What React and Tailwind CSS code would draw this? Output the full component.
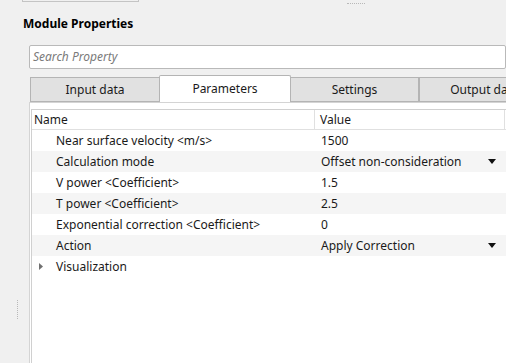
import React from "react";

const font = { fontFamily: '"Segoe UI", "Noto Sans", "Open Sans", sans-serif' };

function Arrow() {
  return (
    <svg width="8" height="5" viewBox="0 0 8 5" className="block">
      <path d="M0 0 H8 L4 5 Z" fill="#111" />
    </svg>
  );
}

const rows = [
  { name: "Near surface velocity <m/s>", value: "1500" },
  { name: "Calculation mode", value: "Offset non-consideration", drop: true },
  { name: "V power <Coefficient>", value: "1.5" },
  { name: "T power <Coefficient>", value: "2.5" },
  { name: "Exponential correction <Coefficient>", value: "0" },
  { name: "Action", value: "Apply Correction", drop: true },
];

export default function App() {
  return (
    <div
      className="relative w-[506px] h-[363px] overflow-hidden bg-[#f0f0f0] text-[12px] text-[#1a1a1a]"
      style={font}
    >
      {/* splitter handles */}
      <div className="absolute left-[347px] top-[3px] w-[18px] border-t border-dotted border-[#b8b8b8]" />
      <div className="absolute left-[17px] top-[300px] h-[19px] border-l border-dotted border-[#b8b8b8]" />

      <div className="flex flex-col">
        <div className="ml-[22px] w-[117px] h-[2px] border-x border-b border-[#c4c4c4] bg-[#f0f0f0]" />
        <div className="ml-[23px] mt-[14px] h-[16px] leading-[16px] font-bold text-[12px] text-black">
          Module Properties
        </div>
        <div className="ml-[29px] mt-[13px] h-[24px] bg-white border border-[#b9b9b9] rounded-[2px] flex items-center pl-[3px]">
          <span className="italic text-[#7a7a7a]">Search Property</span>
        </div>

        {/* tabs */}
        <div className="ml-[30px] mt-[6px] h-[27px] flex items-end">
          <div className="w-[130px] shrink-0 h-[25px] bg-[#e1e1e1] border border-[#b4b4b4] flex items-center justify-center">
            Input data
          </div>
          <div className="w-[132px] shrink-0 -mx-[1px] h-[27px] bg-white border border-b-0 border-[#b4b4b4] rounded-t-[2px] flex items-center justify-center relative z-10">
            Parameters
          </div>
          <div className="w-[129px] shrink-0 h-[25px] bg-[#e1e1e1] border border-[#b4b4b4] flex items-center justify-center">
            Settings
          </div>
          <div className="w-[130px] shrink-0 h-[25px] bg-[#e1e1e1] border border-[#b4b4b4] border-r-0 flex items-center justify-center">
            Output data
          </div>
        </div>

        {/* pane */}
        <div className="ml-[29px] h-[300px] bg-white border-l border-t border-[#d4d4d4] pt-[6px] pl-[1px]">
          <div className="h-full bg-white border-l border-t border-[#d0d0d0]">
            <div className="flex h-[20px] border-b border-[#e0e0e0]">
              <div className="w-[283px] border-r border-[#e0e0e0] pl-[2px] flex items-center">Name</div>
              <div className="w-[190px] border-r border-[#e0e0e0] pl-[5px] flex items-center">Value</div>
            </div>
            {rows.map((r, i) => (
              <div
                key={r.name}
                className={`flex h-[21px] items-center ${i % 2 === 1 ? "bg-[#f5f5f5]" : "bg-white"}`}
              >
                <div className="w-[283px] pl-[24px]">{r.name}</div>
                <div className="w-[190px] pl-[6px] flex items-center justify-between pr-[9px]">
                  <span>{r.value}</span>
                  {r.drop && <Arrow />}
                </div>
              </div>
            ))}
            <div className="flex h-[21px] items-center">
              <div className="w-[24px] flex justify-start pl-[7px]">
                <svg width="4" height="7" viewBox="0 0 4 7" className="block">
                  <path d="M0 0 L4 3.5 L0 7 Z" fill="#707070" />
                </svg>
              </div>
              <div>Visualization</div>
            </div>
          </div>
        </div>
      </div>
    </div>
  );
}
